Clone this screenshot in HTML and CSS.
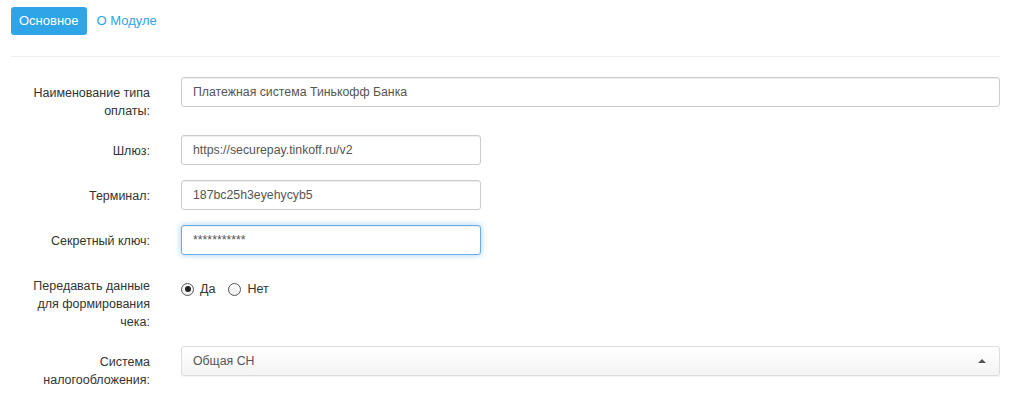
FILE: index.html
```html
<!DOCTYPE html>
<html lang="ru">
<head>
  <meta charset="UTF-8">
  <title>Настройки оплаты</title>
  <link rel="stylesheet" href="styles.css">
</head>
<body>

<div class="page">
  <ul class="tabs">
    <li><a href="#" class="active">Основное</a></li>
    <li><a href="#">О Модуле</a></li>
  </ul>

  <form class="settings">
    <div class="row">
      <label class="caption">Наименование типа оплаты:</label>
      <div class="field">
        <input type="text" class="control" value="Платежная система Тинькофф Банка">
      </div>
    </div>
    <div class="row">
      <label class="caption">Шлюз:</label>
      <div class="field short">
        <input type="text" class="control" value="https://securepay.tinkoff.ru/v2">
      </div>
    </div>
    <div class="row">
      <label class="caption">Терминал:</label>
      <div class="field short">
        <input type="text" class="control" value="187bc25h3eyehycyb5">
      </div>
    </div>
    <div class="row">
      <label class="caption">Секретный ключ:</label>
      <div class="field short">
        <input type="text" class="control focused" value="***********">
      </div>
    </div>
    <div class="row">
      <label class="caption">Передавать данные для формирования чека:</label>
      <div class="field radios">
        <label class="radio"><span class="dot checked"></span>Да</label>
        <label class="radio"><span class="dot"></span>Нет</label>
      </div>
    </div>
    <div class="row">
      <label class="caption">Система налогообложения:</label>
      <div class="field">
        <div class="control select">
          <span>Общая СН</span>
          <span class="caret"></span>
        </div>
      </div>
    </div>
  </form>
</div>

</body>
</html>
```

FILE: styles.css
```css
body {
  margin: 0;
  font-family: "Liberation Sans", Arial, sans-serif;
  font-size: 12px;
  color: #333;
  background: #fff;
}
.page {
  padding: 7px 11px 0 11px;
}
.tabs {
  list-style: none;
  margin: 0;
  padding: 0 0 21px 0;
  display: flex;
  gap: 2px;
  border-bottom: 1px solid #eee;
}
.tabs a {
  display: block;
  padding: 0 8px;
  height: 28px;
  line-height: 28px;
  font-size: 13px;
  color: #2fa4e7;
  text-decoration: none;
  border-radius: 3px;
}
.tabs a.active {
  background: #2fa4e7;
  color: #fff;
}
.settings {
  padding-top: 20px;
}
.row {
  display: flex;
  gap: 31px;
  margin-bottom: 15px;
}
.caption {
  width: 139px;
  flex: none;
  text-align: right;
  padding-top: 7px;
  font-size: 12.5px;
  line-height: 18px;
}
.field {
  width: 819px;
}
.field.short {
  width: 300px;
}
.control {
  box-sizing: border-box;
  width: 100%;
  height: 30px;
  padding: 0 11px;
  font-family: inherit;
  font-size: 12.3px;
  color: #555;
  border: 1px solid #ccc;
  border-radius: 3px;
  box-shadow: inset 0 1px 1px rgba(0,0,0,0.075);
  outline: none;
}
.control.focused {
  border-color: #66afe9;
  box-shadow: inset 0 1px 1px rgba(0,0,0,0.075), 0 0 6px rgba(102,175,233,0.6);
}
.radios {
  display: flex;
  gap: 13px;
  padding-top: 12px;
}
.radio {
  display: flex;
  align-items: center;
  gap: 6px;
  font-size: 12.5px;
  color: #333;
  height: 14px;
}
.dot {
  width: 13px;
  height: 13px;
  border: 1px solid #555;
  border-radius: 50%;
  position: relative;
  box-sizing: border-box;
  background: linear-gradient(#fff, #eee);
}
.dot.checked::after {
  content: "";
  position: absolute;
  left: 2.5px;
  top: 2.5px;
  width: 6px;
  height: 6px;
  border-radius: 50%;
  background: #222;
}
.select {
  display: flex;
  align-items: center;
  justify-content: space-between;
  border-color: #ddd;
  background: linear-gradient(#fff, #f4f4f4);
  box-shadow: 0 1px 1px rgba(0,0,0,0.05);
}
.caret {
  width: 0;
  height: 0;
  border-left: 4px solid transparent;
  border-right: 4px solid transparent;
  border-bottom: 4px solid #555;
  margin-right: 2px;
}
```
